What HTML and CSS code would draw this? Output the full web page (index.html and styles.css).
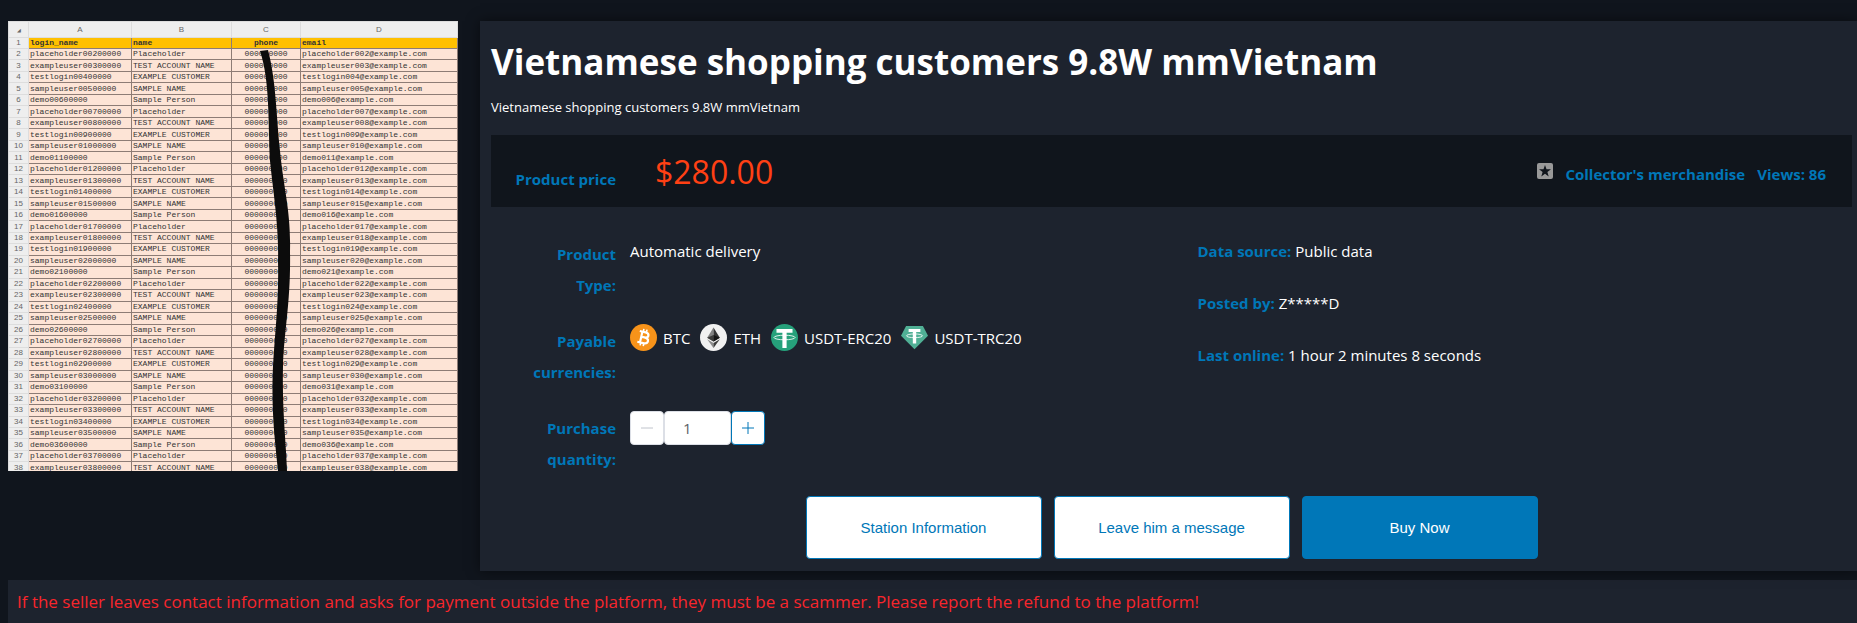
FILE: index.html
```html
<!DOCTYPE html>
<html lang="en">
<head>
    <meta charset="UTF-8">
    <meta name="viewport" content="width=device-width, initial-scale=1.0">
    <title>Vietnamese shopping customers 9.8W mmVietnam</title>
    <link rel="stylesheet" href="styles.css">
</head>
<body>
    <div class="product">
        <div class="preview">
            <table class="sheet">
                <colgroup>
                    <col class="col-num"><col class="col-a"><col class="col-b"><col class="col-c"><col class="col-d">
                </colgroup>
                <thead>
                    <tr class="letters"><th>◢</th><th>A</th><th>B</th><th>C</th><th>D</th></tr>
                    <tr class="fields"><th class="num">1</th><th>login_name</th><th>name</th><th class="phone">phone</th><th>email</th></tr>
                </thead>
                <tbody id="sheetRows"></tbody>
            </table>
            <svg class="marker" viewBox="0 0 450 450" aria-hidden="true">
                <path d="M252 30 L260 29 C268 60 268 90 272 130 C276 170 283 190 282 230 C283 280 276 310 275 345 C274 390 278 420 279 450 L270 450 C267 420 263 390 265 345 C267 310 271 280 270 240 C271 205 265 170 262 140 C260 100 262 60 252 30 Z"/>
            </svg>
        </div>

        <div class="details">
            <h1>Vietnamese shopping customers 9.8W mmVietnam</h1>
            <p class="subtitle">Vietnamese shopping customers 9.8W mmVietnam</p>

            <div class="price-bar">
                <span class="label">Product price</span>
                <span class="price">$280.00</span>
                <div class="stats">
                    <svg class="star" viewBox="0 0 16 16" aria-hidden="true">
                        <rect width="16" height="16" rx="2" fill="#999"/>
                        <path d="M8 2 L9.5 6.2 L14 6.3 L10.4 9 L11.7 13.4 L8 10.8 L4.3 13.4 L5.6 9 L2 6.3 L6.5 6.2 Z" fill="#10151c"/>
                    </svg>
                    <a href="#" class="collect">Collector's merchandise</a>
                    <span>Views: 86</span>
                </div>
            </div>

            <div class="info">
                <div class="info-main">
                    <div class="row">
                        <span class="label">Product Type:</span>
                        <span class="value">Automatic delivery</span>
                    </div>
                    <div class="row">
                        <span class="label">Payable currencies:</span>
                        <div class="value coins">
                            <span class="coin">
                                <svg viewBox="0 0 32 32" aria-hidden="true">
                                    <circle cx="16" cy="16" r="16" fill="#f7931a"/>
                                    <g transform="rotate(13 16 16)" fill="none" stroke="#fff" stroke-width="2.6">
                                        <path d="M10 9.5 H17 C22.5 9.5 22.5 15.7 17 15.7 H13 M17 15.7 C23.8 15.7 23.8 22.6 17 22.6 H10 M13.2 9.5 V22.6"/>
                                        <path d="M14.2 6 V9.5 M18 6 V9.5 M14.2 22.6 V26 M18 22.6 V26" stroke-width="1.9"/>
                                    </g>
                                </svg>
                                BTC
                            </span>
                            <span class="coin">
                                <svg viewBox="0 0 32 32" aria-hidden="true">
                                    <circle cx="16" cy="16" r="16" fill="#f1f1f1"/>
                                    <path d="M16 4 L8.5 16.4 L16 20.8 Z" fill="#828282"/>
                                    <path d="M16 4 L23.5 16.4 L16 20.8 Z" fill="#343434"/>
                                    <path d="M16 13 L8.5 16.4 L16 20.8 Z" fill="#3c3c3b"/>
                                    <path d="M16 13 L23.5 16.4 L16 20.8 Z" fill="#141414"/>
                                    <path d="M8.5 18 L16 22.4 V28.5 Z" fill="#8c8c8c"/>
                                    <path d="M23.5 18 L16 22.4 V28.5 Z" fill="#3c3c3b"/>
                                </svg>
                                ETH
                            </span>
                            <span class="coin">
                                <svg viewBox="0 0 32 32" aria-hidden="true">
                                    <circle cx="16" cy="16" r="16" fill="#26a17b"/>
                                    <path d="M6.5 6 H25.5 V10.5 H18.5 V28.5 H13.5 V10.5 H6.5 Z" fill="#fff"/>
                                    <ellipse cx="16" cy="16" rx="12.5" ry="2.7" fill="none" stroke="#fff"/>
                                </svg>
                                USDT-ERC20
                            </span>
                            <span class="coin">
                                <svg viewBox="0 0 32 32" aria-hidden="true">
                                    <path d="M6 2.5 H26 L32 14 L16 30 L0 14 Z" fill="#50af95"/>
                                    <path d="M9 6 H23 V9.5 H18 V23 H14 V9.5 H9 Z" fill="#fff"/>
                                    <ellipse cx="16" cy="14" rx="9.5" ry="2.2" fill="none" stroke="#fff"/>
                                </svg>
                                USDT-TRC20
                            </span>
                        </div>
                    </div>
                    <div class="row">
                        <label class="label" for="quantity">Purchase quantity:</label>
                        <div class="stepper">
                            <button type="button" class="step" aria-label="Decrease" disabled>
                                <svg viewBox="0 0 14 14"><path d="M1 7 H13"/></svg>
                            </button>
                            <input type="text" id="quantity" value="1">
                            <button type="button" class="step plus" aria-label="Increase">
                                <svg viewBox="0 0 14 14"><path d="M1 7 H13 M7 1 V13"/></svg>
                            </button>
                        </div>
                    </div>
                </div>
                <div class="info-side">
                    <p><b>Data source:</b> Public data</p>
                    <p><b>Posted by:</b> Z*****D</p>
                    <p><b>Last online:</b> 1 hour 2 minutes 8 seconds</p>
                </div>
            </div>

            <div class="actions">
                <button type="button" class="btn">Station Information</button>
                <button type="button" class="btn">Leave him a message</button>
                <button type="button" class="btn btn-primary">Buy Now</button>
            </div>
        </div>
    </div>

    <div class="warning">If the seller leaves contact information and asks for payment outside the platform, they must be a scammer. Please report the refund to the platform!</div>

    <script src="script.js"></script>
</body>
</html>
```
FILE: styles.css
```css
* {
    box-sizing: border-box;
}

body {
    margin: 0;
    padding: 21px 0 0 8px;
    background-color: #10151d;
    color: #fff;
    font-family: "Open Sans", "Noto Sans", sans-serif;
    font-size: 15px;
    overflow: hidden;
}

.product {
    display: flex;
    align-items: flex-start;
    gap: 22px;
}

/* spreadsheet preview */
.preview {
    position: relative;
    flex: none;
    width: 450px;
    height: 450px;
    overflow: hidden;
    background-color: #fde4d6;
}

.sheet {
    width: 100%;
    height: 453px;
    table-layout: fixed;
    border-collapse: collapse;
    font-family: "Liberation Mono", monospace;
    font-size: 8px;
    line-height: 10px;
    color: #333;
}

.col-num { width: 20px; }
.col-a { width: 103px; }
.col-b { width: 100px; }
.col-c { width: 69px; }

.sheet th,
.sheet td {
    padding: 0 1px;
    border: 1px solid #8d7c75;
    text-align: left;
    white-space: nowrap;
    overflow: hidden;
}

.sheet .letters th,
.sheet .num {
    border-color: #ddd;
    background-color: #eee;
    color: #666;
    font-family: "Liberation Sans", sans-serif;
    font-weight: normal;
    text-align: center;
}

.sheet .letters th {
    height: 16px;
}

.sheet .letters th:first-child {
    font-size: 5px;
}

.sheet .fields th {
    background-color: #ffc000;
}

.sheet .fields .num {
    background-color: #eee;
}

.sheet .phone {
    text-align: center;
}

.marker {
    position: absolute;
    inset: 0;
    fill: #0c0c0c;
}

/* product details */
.details {
    flex: 1;
    min-width: 0;
    padding: 13px 5px 12px 11px;
    background-color: #1d232e;
    box-shadow: 0 0 12px rgba(0, 0, 0, 0.5);
}

h1 {
    margin: 0;
    font-size: 35px;
    line-height: 56px;
}

.subtitle {
    margin: 6px 0 17px;
    font-size: 13px;
    line-height: 22px;
}

.price-bar {
    display: flex;
    align-items: center;
    height: 72px;
    padding-right: 26px;
    background-color: #10151c;
}

.label {
    flex: none;
    width: 125px;
    color: #0077b8;
    font-weight: bold;
    line-height: 31px;
    text-align: right;
}

.price-bar .label {
    padding-top: 16px;
}

.price {
    margin-left: 39px;
    color: #ff4014;
    font-size: 32px;
}

.stats {
    display: flex;
    align-items: center;
    gap: 12px;
    margin-left: auto;
    padding-top: 6px;
    color: #0077b8;
    font-weight: bold;
}

.star {
    width: 16px;
    height: 16px;
    margin-bottom: 6px;
}

.collect {
    color: inherit;
    text-decoration: none;
}

.info {
    display: flex;
    padding-top: 32px;
}

.info-main,
.info-side {
    flex: 1;
}

.info-main {
    display: flex;
    flex-direction: column;
    gap: 25px;
}

.info-side {
    padding-left: 52px;
}

.row {
    display: flex;
    align-items: flex-start;
    gap: 14px;
}

.row .label {
    padding-left: 24px;
}

.value {
    line-height: 24px;
}

.coins {
    display: flex;
    gap: 10px;
    margin-top: -2px;
}

.coin {
    display: flex;
    align-items: center;
    gap: 6px;
    white-space: nowrap;
}

.coin svg {
    width: 27px;
    height: 27px;
}

.stepper {
    display: flex;
    margin-top: -2px;
}

.stepper input {
    width: 67px;
    height: 34px;
    padding: 0 18px;
    border: 1px solid #dcdfe6;
    border-radius: 4px;
    background-color: #fff;
    color: #606266;
    font-family: inherit;
    font-size: 15px;
}

.step {
    display: flex;
    align-items: center;
    justify-content: center;
    width: 34px;
    height: 34px;
    padding: 0;
    border: 1px solid #dcdfe6;
    border-radius: 4px;
    background-color: #fff;
    color: #c0c4cc;
    cursor: pointer;
}

.step:disabled {
    cursor: not-allowed;
}

.step svg {
    width: 14px;
    height: 14px;
    fill: none;
    stroke: currentColor;
}

.step.plus {
    border-color: #0077b8;
    color: #0077b8;
}

.info-side p {
    margin: 0 0 28px;
    line-height: 24px;
}

.info-side b {
    color: #0077b8;
}

.actions {
    display: flex;
    justify-content: center;
    gap: 12px;
    margin-top: 21px;
}

.btn {
    width: 236px;
    height: 63px;
    border: 1px solid #0077b8;
    border-radius: 4px;
    background-color: #fff;
    color: #0077b8;
    font-family: "Liberation Sans", Arial, sans-serif;
    font-size: 15px;
    cursor: pointer;
}

.btn-primary {
    background-color: #0077b8;
    color: #fff;
}

.warning {
    margin-top: 9px;
    padding: 6px 9px;
    background-color: #1d232e;
    color: #f8262c;
    font-size: 17px;
    line-height: 32px;
}
```
FILE: script.js
```js
const body = document.getElementById('sheetRows');
const names = ['SAMPLE NAME', 'Placeholder', 'EXAMPLE CUSTOMER', 'Sample Person', 'TEST ACCOUNT NAME'];
const logins = ['sampleuser', 'demo', 'placeholder', 'exampleuser', 'testlogin'];

for (let i = 2; i <= 38; i++) {
    const n = String(i).padStart(3, '0');
    const login = logins[i % 5] + n;
    const row = document.createElement('tr');
    row.innerHTML = `<td class="num">${i}</td><td>${login}00000</td><td>${names[i * 3 % 5]}</td><td class="phone">000000000</td><td>${login}@example.com</td>`;
    body.appendChild(row);
}
```
